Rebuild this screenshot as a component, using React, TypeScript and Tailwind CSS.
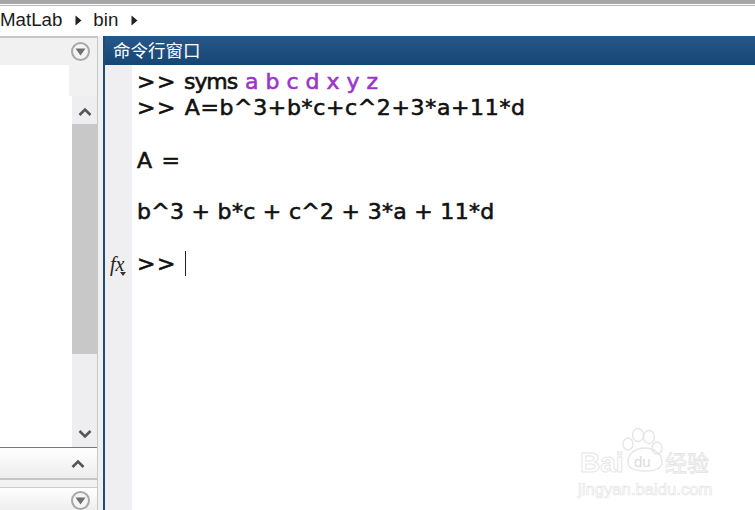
// App.tsx
const consoleFont = "font-['DejaVu_Sans',sans-serif]";

function MenuButton() {
  return (
    <div className="flex h-[19px] w-[19px] items-center justify-center rounded-full border-2 border-[#a8a8a8] bg-[#f4f4f4]">
      <svg width="11" height="8" viewBox="0 0 11 8">
        <path d="M0.5 0.5H10.5L5.5 7.5Z" fill="#6e6e72" />
      </svg>
    </div>
  );
}

function Chevron({ up }: { up?: boolean }) {
  return (
    <svg width="14" height="10" viewBox="0 0 14 10" fill="none">
      <path d={up ? 'M1.5 8L7 2.5L12.5 8' : 'M1.5 2L7 7.5L12.5 2'} stroke="#55555a" strokeWidth="2.6" />
    </svg>
  );
}

function Watermark() {
  return (
    <div className="pointer-events-none absolute left-[578px] top-[428px] h-[72px] w-[140px]">
      <svg className="absolute left-[0px] top-[0px]" width="140" height="50" viewBox="0 0 140 50" fill="none" stroke="#e6e6e6" strokeWidth="1.4">
        <ellipse cx="50" cy="16" rx="5" ry="6" />
        <ellipse cx="60" cy="7" rx="5.5" ry="6.5" />
        <ellipse cx="71" cy="9" rx="5.5" ry="6.5" />
        <ellipse cx="79" cy="20" rx="5" ry="6" />
        <path d="M50 34c0-9 8-14 17-14s17 6 17 14c0 7-7 9-17 9s-17-2-17-9z" />
      </svg>
      <span className="absolute left-[2px] top-[20px] text-[28px] leading-[30px] font-bold text-white [-webkit-text-stroke:1px_#e6e6e6] font-['Liberation_Sans',sans-serif]">Bai</span>
      <span className="absolute left-[56px] top-[25px] text-[15px] leading-[18px] text-[#dcdcdc] font-['Liberation_Sans',sans-serif]">du</span>
      <span className="absolute left-[87px] top-[18px] text-[22px] leading-[30px] text-white [-webkit-text-stroke:0.8px_#e2e2e2] font-['Noto_Sans_CJK_SC',sans-serif]">经验</span>
      <span className="absolute left-[0px] top-[52px] text-[16.7px] leading-[20px] text-white [-webkit-text-stroke:0.7px_#e6e6e6] font-['Liberation_Sans',sans-serif]">jingyan.baidu.com</span>
    </div>
  );
}

function Prompt() {
  return <span className="tracking-[1.6px]">&gt;&gt;</span>;
}

export default function App() {
  return (
    <div className="relative flex h-[510px] w-[755px] flex-col overflow-hidden bg-white">
      {/* top edge */}
      <div className="h-[4px] bg-[#a6a6a6]" />
      <div className="h-[1px] bg-white" />
      <div className="h-[1px] bg-[#b8b8b8]" />

      {/* Breadcrumb */}
      <div className="flex h-[30px] items-center bg-white pb-[2px] font-['Liberation_Sans',sans-serif] text-[18.7px] text-[#1a1a1a]">
        <span>MatLab</span>
        <svg className="ml-[13px]" width="7" height="11" viewBox="0 0 7 11"><path d="M0.5 0.5L6.5 5.5L0.5 10.5Z" fill="#222" /></svg>
        <span className="ml-[11px]">bin</span>
        <svg className="ml-[13px]" width="7" height="11" viewBox="0 0 7 11"><path d="M0.5 0.5L6.5 5.5L0.5 10.5Z" fill="#222" /></svg>
      </div>

      <div className="flex min-h-0 flex-1 bg-[#eeeef0]">
        {/* Left panels */}
        <div className="flex w-[98px] flex-col border-r border-[#c8c8c8]">
          <div className="flex h-[29px] items-center justify-end border-t-2 border-[#c8c8c8] bg-[#f1f1f2] pr-[7px]">
            <MenuButton />
          </div>
          <div className="flex h-[31px] bg-[#f1f1f2]">
            <div className="w-[69px] bg-white" />
          </div>
          <div className="flex h-[352px] border-b border-[#77777c]">
            <div className="w-[72px] bg-white" />
            <div className="flex w-[25px] flex-col items-center bg-[#eeedef]">
              <div className="flex h-[28px] w-full items-center justify-center pt-[4px]"><Chevron up /></div>
              <div className="h-[230px] w-full bg-[#c8c8c9]" />
              <div className="flex flex-1 items-end justify-center pb-[8px]"><Chevron /></div>
            </div>
          </div>
          <div className="flex h-[32px] items-center justify-end border-b-2 border-[#c4c4c4] bg-gradient-to-b from-white to-[#ededee] pt-[2px] pr-[12px]">
            <Chevron up />
          </div>
          <div className="h-[7px] bg-[#f2f2f3]" />
          <div className="flex flex-1 items-start justify-end border-t border-[#cfcfcf] bg-gradient-to-b from-white to-[#eeeeef] pt-[3px] pr-[7px]">
            <MenuButton />
          </div>
        </div>

        <div className="w-[5px] bg-[#f0f1f3]" />

        {/* Command window */}
        <div className="flex flex-1 flex-col border-l-2 border-[#1f4e70]">
          <div className="flex h-[29px] items-center bg-gradient-to-b from-[#27588c] to-[#164673] pl-[8px] font-['Noto_Sans_CJK_SC',sans-serif] text-[17.5px] text-white">
            命令行窗口
          </div>
          <div className="flex flex-1">
            <div className="relative w-[27px] bg-[#efeef0]">
              <span className="absolute left-[5px] top-[187px] font-['Liberation_Serif',serif] text-[20px] leading-[24px] text-[#222] italic">fx</span>
              <svg className="absolute left-[15px] top-[207px]" width="6" height="4" viewBox="0 0 6 4"><path d="M0 0H6L3 4Z" fill="#333" /></svg>
            </div>
            <div className={`flex-1 bg-white pt-[4px] pl-[5px] text-[22px] leading-[25.7px] text-[#111] [-webkit-text-stroke:0.6px_#111] ${consoleFont}`}>
              <div className="whitespace-pre">
                <Prompt />
                <span> </span>
                <span className="tracking-[-1.1px]">syms</span>
                <span className="ml-[8px] text-[#9a37c8] [-webkit-text-stroke:0.6px_#9a37c8]">a b c d x y z</span>
              </div>
              <div className="whitespace-pre">
                <Prompt />
                <span className="tracking-[0.65px]"> A=b^3+b*c+c^2+3*a+11*d</span>
              </div>
              <div className="h-[27.7px]" />
              <div className="tracking-[1.2px]">A =</div>
              <div className="h-[25.7px]" />
              <div className="tracking-[0.3px]">b^3 + b*c + c^2 + 3*a + 11*d</div>
              <div className="h-[25.7px]" />
              <div className="flex items-center">
                <Prompt />
                <span className="ml-[8px] h-[25px] w-[1px] bg-[#222]" />
              </div>
            </div>
          </div>
        </div>
      </div>

      <Watermark />
    </div>
  );
}
